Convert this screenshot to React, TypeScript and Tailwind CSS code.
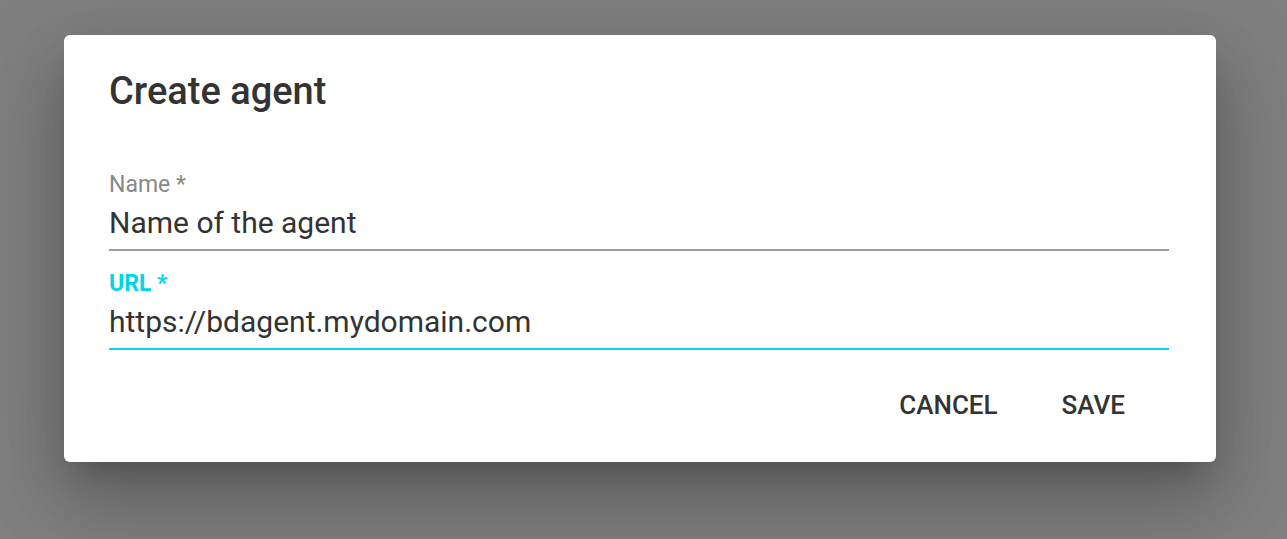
import { useState } from 'react';

export default function App() {
  const [name, setName] = useState('Name of the agent');
  const [url, setUrl] = useState('https://bdagent.mydomain.com');

  return (
    <main className="min-h-screen bg-[#808080] pl-16 pr-[71px] pt-[35px] font-['Roboto',sans-serif] text-[#333333]">
      <form
        role="dialog"
        aria-labelledby="dialog-title"
        onSubmit={(e) => e.preventDefault()}
        className="rounded-md bg-white pb-8 pl-[45px] pr-[47px] pt-9 shadow-[0_21px_28px_-13px_rgba(0,0,0,0.22),0_45px_72px_6px_rgba(0,0,0,0.14),0_17px_87px_15px_rgba(0,0,0,0.12)]"
      >
        <h1 id="dialog-title" className="text-[38px] font-medium leading-10">
          Create agent
        </h1>
        <div className="mt-[62px] flex flex-col border-b-2 border-[#9c9c9c]">
          <label htmlFor="name" className="text-[23px] leading-6 text-[#888888]">
            Name *
          </label>
          <input
            id="name"
            required
            value={name}
            onChange={(e) => setName(e.target.value)}
            className="h-[52px] w-full pb-0.5 text-[30px] outline-none"
          />
        </div>
        <div className="mt-5 flex flex-col border-b-2 border-[#10d2e4]">
          <label htmlFor="url" className="pt-px text-[23px] font-bold leading-6 text-[#00d6e8]">
            URL *
          </label>
          <input
            id="url"
            required
            value={url}
            onChange={(e) => setUrl(e.target.value)}
            className="h-[52px] w-full pb-0.5 text-[30px] outline-none"
          />
        </div>
        <div className="mt-[30px] flex justify-end gap-4 pr-5">
          <button type="button" className="h-[50px] px-6 text-[26px] font-medium">
            CANCEL
          </button>
          <button type="submit" className="h-[50px] px-6 text-[26px] font-medium">
            SAVE
          </button>
        </div>
      </form>
    </main>
  );
}
